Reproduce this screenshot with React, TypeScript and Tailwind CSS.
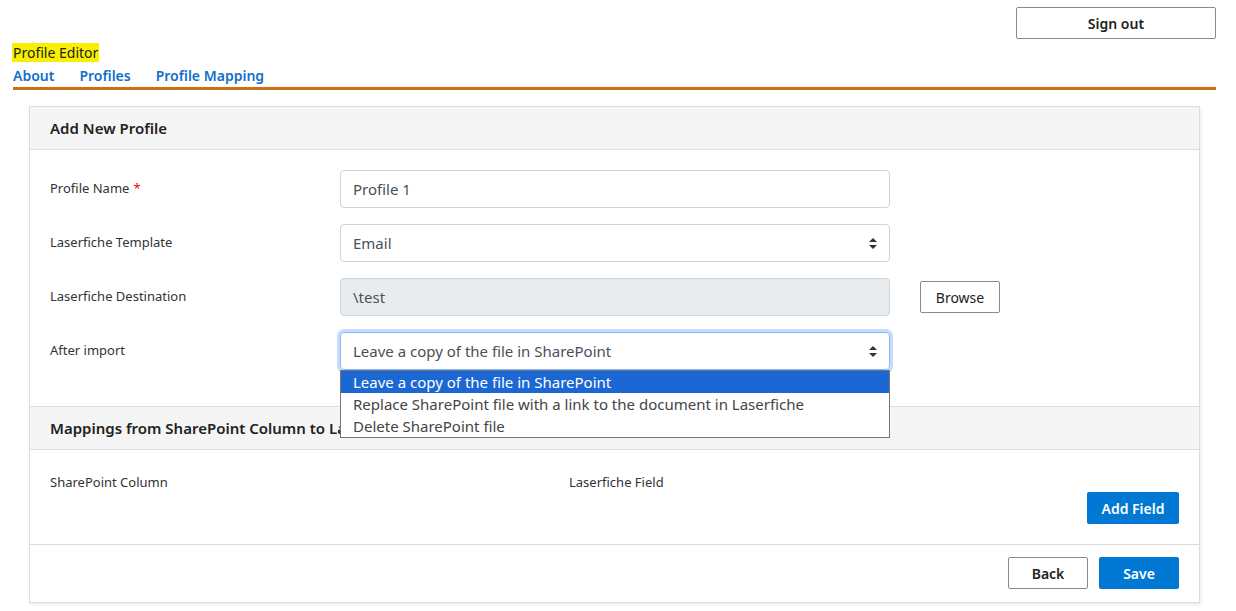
import React from 'react';

const font = { fontFamily: '"Segoe UI", "Noto Sans", "Open Sans", sans-serif' };

function Arrows() {
  return (
    <svg width="8" height="11" viewBox="0 0 8 11" className="text-[#333]">
      <path d="M4 0 L8 4 L0 4 Z" fill="currentColor" />
      <path d="M0 7 L8 7 L4 11 Z" fill="currentColor" />
    </svg>
  );
}

function Row({ label, required, children, extra }: { label: string; required?: boolean; children: React.ReactNode; extra?: React.ReactNode }) {
  return (
    <div className="flex items-center mb-[16px]">
      <div className="w-[290px] text-[13px] text-[#333]">
        {label}
        {required && <span className="text-[#e00] ml-[4px]">*</span>}
      </div>
      <div className="relative w-[550px]">{children}</div>
      {extra}
    </div>
  );
}

export default function App() {
  const options = [
    'Leave a copy of the file in SharePoint',
    'Replace SharePoint file with a link to the document in Laserfiche',
    'Delete SharePoint file',
  ];

  return (
    <div className="min-h-screen bg-white px-[13px] pt-[7px] text-[#222]" style={font}>
      <div className="flex justify-end pr-[7px]">
        <button className="w-[200px] h-[32px] border border-[#8a8a8a] rounded-[2px] text-[14px] font-semibold text-[#222] bg-white">
          Sign out
        </button>
      </div>

      <div className="mt-[5px] leading-[16px]">
        <span className="bg-[#f8f000] text-[14px] px-[1px] -ml-[1px]">Profile Editor</span>
      </div>

      <nav className="flex gap-[25px] text-[14px] leading-[20px] font-semibold text-[#1170c8] pt-[5px] pb-[1px] border-b-[3px] border-[#cc7014] mr-[7px]">
        <a>About</a>
        <a>Profiles</a>
        <a>Profile Mapping</a>
      </nav>

      <div className="mx-[16px] mt-[16px] mr-[23px] border border-[#dcdcdc] shadow-[1px_2px_3px_rgba(0,0,0,0.08)]">
        <div className="h-[43px] bg-[#f5f5f5] border-b border-[#dcdcdc] px-[20px] flex items-center text-[15px] font-semibold text-[#222]">
          Add New Profile
        </div>

        <div className="px-[20px] pt-[20px] pb-[20px]">
          <Row label="Profile Name" required>
            <div className="h-[38px] border border-[#ced4da] rounded-[4px] px-[12px] flex items-center text-[15px] text-[#495057]">
              Profile 1
            </div>
          </Row>
          <Row label="Laserfiche Template">
            <div className="h-[38px] border border-[#ced4da] rounded-[4px] px-[12px] flex items-center justify-between text-[15px] text-[#495057]">
              <span>Email</span>
              <Arrows />
            </div>
          </Row>
          <Row
            label="Laserfiche Destination"
            extra={
              <button className="ml-[30px] w-[80px] h-[32px] border border-[#8a8a8a] rounded-[2px] text-[14px] text-[#222] bg-white">
                Browse
              </button>
            }
          >
            <div className="h-[38px] border border-[#ced4da] bg-[#e9ecef] rounded-[4px] px-[12px] flex items-center text-[15px] text-[#495057]">
              \test
            </div>
          </Row>
          <Row label="After import">
            <div className="h-[38px] border border-[#86b7fe] ring-[3px] ring-[#c5dcfd] rounded-[4px] px-[12px] flex items-center justify-between text-[15px] text-[#495057]">
              <span>{options[0]}</span>
              <Arrows />
            </div>
            <div className="absolute left-0 top-[38px] w-full z-10 bg-white border border-[#767676] text-[15px] text-[#444]">
              {options.map((o, i) => (
                <div
                  key={o}
                  className={`h-[22px] px-[12px] flex items-center ${i === 0 ? 'bg-[#1b67d3] text-white' : ''}`}
                >
                  {o}
                </div>
              ))}
            </div>
          </Row>
        </div>

        <div className="h-[44px] bg-[#f5f5f5] border-y border-[#dcdcdc] px-[20px] flex items-center text-[15px] font-semibold text-[#222]">
          Mappings from SharePoint Column to Laserfiche Field
        </div>

        <div className="px-[20px] pt-[22px] pb-[20px] border-b border-[#dcdcdc]">
          <div className="flex text-[13px] leading-[20px] text-[#333]">
            <div className="w-[519px]">SharePoint Column</div>
            <div>Laserfiche Field</div>
          </div>
          <div className="flex justify-end">
            <button className="w-[92px] h-[32px] bg-[#0078d4] rounded-[2px] text-white text-[14px] font-semibold">
              Add Field
            </button>
          </div>
        </div>

        <div className="flex justify-end gap-[11px] px-[20px] pt-[12px] pb-[13px]">
          <button className="w-[80px] h-[32px] border border-[#8a8a8a] rounded-[2px] text-[14px] font-semibold text-[#222] bg-white">
            Back
          </button>
          <button className="w-[80px] h-[32px] bg-[#0078d4] rounded-[2px] text-white text-[14px] font-semibold">
            Save
          </button>
        </div>
      </div>
    </div>
  );
}
